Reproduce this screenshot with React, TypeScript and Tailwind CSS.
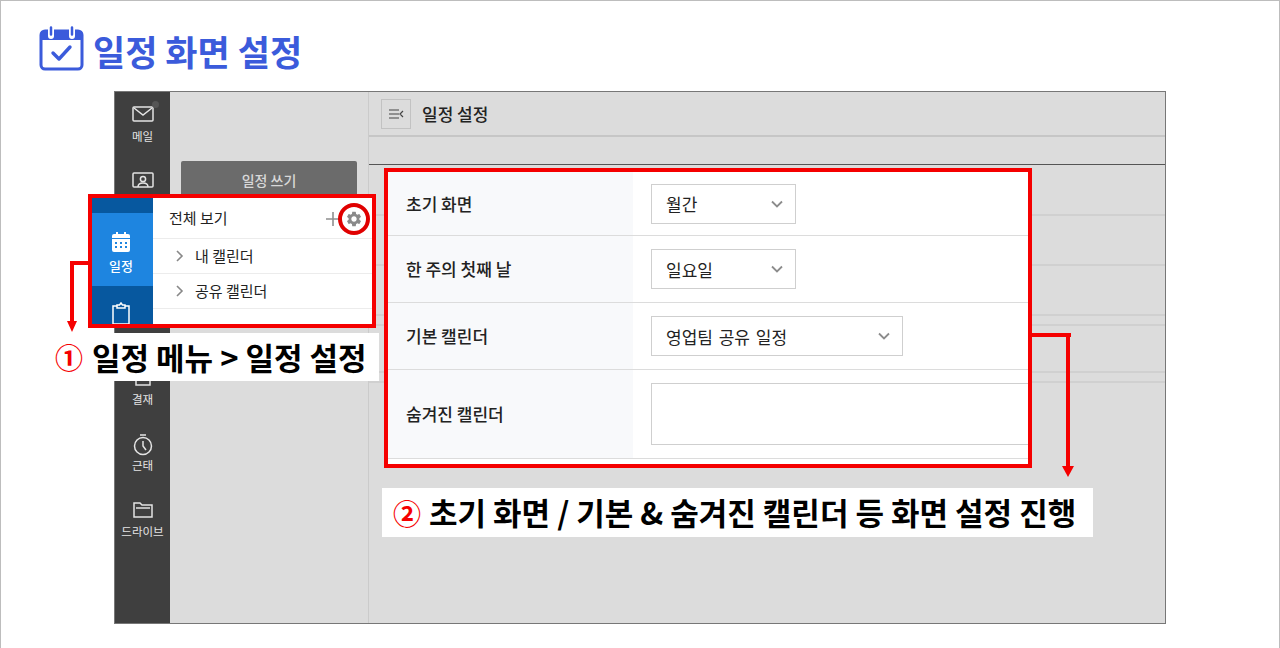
import { MdSettings } from "react-icons/md";

const font = "font-['Noto_Sans_CJK_KR','Noto_Sans',sans-serif]";

function TitleIcon() {
  return (
    <svg width="46" height="46" viewBox="0 0 46 46" fill="none">
      <rect x="2" y="5" width="41" height="38" rx="4" stroke="#3b5bdb" strokeWidth="3" />
      <path d="M2 8a3 3 0 0 1 3-3h35a3 3 0 0 1 3 3v6H2z" fill="#3b5bdb" />
      <path d="M12 2v8M33 2v8" stroke="#fff" strokeWidth="6" strokeLinecap="round" />
      <path d="M12 1.5v7M33 1.5v7" stroke="#3b5bdb" strokeWidth="2.5" strokeLinecap="round" />
      <path d="M14 27l6 6 11-12" stroke="#3b5bdb" strokeWidth="3.4" strokeLinecap="round" strokeLinejoin="round" />
    </svg>
  );
}

function NavItem({ label, icon }: { label: string; icon: React.ReactNode }) {
  return (
    <div className="flex h-[66px] flex-col items-center text-[#e4e4e4]">
      <div className="h-[24px]">{icon}</div>
      <span className="text-[11.5px] leading-[16px]">{label}</span>
    </div>
  );
}

function Chevron() {
  return (
    <svg width="12" height="8" viewBox="0 0 12 8" fill="none">
      <path d="M1 1.5l5 5 5-5" stroke="#8c8c8c" strokeWidth="1.8" />
    </svg>
  );
}

function Select({ value, width }: { value: string; width: string }) {
  return (
    <div className={`flex h-[40px] items-center justify-between border border-[#cfcfcf] bg-white pl-[14px] pr-[12px] text-[17px] [word-spacing:2px] text-[#222] ${width}`}>
      <span className="pt-[1px]">{value}</span>
      <Chevron />
    </div>
  );
}

function FormRow({ label, h, children }: { label: string; h: string; children: React.ReactNode }) {
  return (
    <div className={`flex border-b border-[#dcdcdc] ${h}`}>
      <div className="flex w-[245px] shrink-0 items-center bg-[#f8f9fb] pl-[18px] text-[17px] font-medium text-[#222]">{label}</div>
      <div className="flex flex-1 items-center pl-[18px]">{children}</div>
    </div>
  );
}

function TreeRow({ label }: { label: string }) {
  return (
    <div className="flex h-[35px] items-center border-b border-[#ececec] pl-[23px] text-[15px] text-[#222]">
      <svg width="8" height="12" viewBox="0 0 8 12" fill="none">
        <path d="M1 1l5 5-5 5" stroke="#888" strokeWidth="1.6" />
      </svg>
      <span className="ml-[11px]">{label}</span>
    </div>
  );
}

export default function App() {
  return (
    <div className={`relative h-[648px] w-[1280px] overflow-hidden border-l border-r border-t border-[#bdbdbd] bg-white ${font}`}>
      <div className="flex h-[90px] items-start pl-[38px] pt-[25px]">
        <TitleIcon />
        <h1 className="ml-[8px] mt-[1px] text-[35px] leading-[48px] font-bold text-[#3b5bdb]">일정 화면 설정</h1>
      </div>

      {/* dimmed app window */}
      <div className="ml-[113px] flex h-[533px] w-[1052px] border border-[#777] bg-[#dcdcdc]">
        <div className="relative flex w-[55px] shrink-0 flex-col bg-[#3f3f3f] pt-[12px]">
          <span className="absolute left-[37px] top-[9px] h-[7px] w-[7px] rounded-full bg-[#555]" />
          <NavItem
            label="메일"
            icon={
              <svg width="22" height="20" viewBox="0 0 22 20" fill="none" stroke="#e4e4e4" strokeWidth="1.5">
                <rect x="1" y="3" width="20" height="14" rx="1" />
                <path d="M2 4l9 7 9-7" />
              </svg>
            }
          />
          <NavItem
            label="주소록"
            icon={
              <svg width="22" height="20" viewBox="0 0 22 20" fill="none" stroke="#e4e4e4" strokeWidth="1.5">
                <rect x="1" y="3" width="20" height="14" rx="1" />
                <circle cx="11" cy="9" r="2.6" />
                <path d="M6 17c0-3 2-4 5-4s5 1 5 4" />
              </svg>
            }
          />
          <div className="h-[131px]" />
          <NavItem
            label="결재"
            icon={
              <svg width="22" height="20" viewBox="0 0 22 20" fill="none" stroke="#e4e4e4" strokeWidth="1.5">
                <path d="M15 3H4v15h14V9" />
                <path d="M9 12l9-9" />
              </svg>
            }
          />
          <NavItem
            label="근태"
            icon={
              <svg width="22" height="24" viewBox="0 0 22 24" fill="none" stroke="#e4e4e4" strokeWidth="1.5">
                <circle cx="11" cy="13" r="8.5" />
                <path d="M8 2h6M11 8v5l3 4" />
              </svg>
            }
          />
          <NavItem
            label="드라이브"
            icon={
              <svg width="22" height="20" viewBox="0 0 22 20" fill="none" stroke="#e4e4e4" strokeWidth="1.5">
                <path d="M2 4h6l2 2h10v12H2z" />
                <path d="M4 9h14" />
              </svg>
            }
          />
        </div>

        <div className="w-[199px] shrink-0 border-r border-[#cbcbcb] pl-[11px] pt-[69px]">
          <div className="flex h-[40px] w-[176px] items-center justify-center rounded-[2px] bg-[#6b6b6b] pb-[2px] text-[14px] font-medium text-[#d8d8d8]">일정 쓰기</div>
        </div>

        <div className="flex flex-1 flex-col">
          <div className="flex h-[45px] items-center border-b-2 border-[#c6c6c6] pl-[12px]">
            <div className="flex h-[30px] w-[30px] items-center justify-center border border-[#c2c2c2]">
              <svg width="16" height="12" viewBox="0 0 16 12" fill="none" stroke="#444" strokeWidth="1.2">
                <path d="M1 2h10M1 6h10M1 10h10M15 3l-3 3 3 3" />
              </svg>
            </div>
            <span className="ml-[11px] text-[17px] font-medium text-[#222]">일정 설정</span>
          </div>
          <div className="h-[28px] border-b border-[#555]" />
          <div className="h-[51px] border-b-2 border-[#d0d0d0]" />
          <div className="h-[50px] border-b-2 border-[#d0d0d0]" />
          <div className="h-[50px] border-b-2 border-[#d0d0d0]" />
          <div className="h-[10px] border-b-2 border-[#d0d0d0]" />
          <div className="h-[47px] border-b-2 border-[#d0d0d0]" />
          <div className="h-[10px] border-b-2 border-[#d0d0d0]" />
        </div>
      </div>

      {/* callout 1: menu */}
      <div className="absolute left-[87px] top-[193px] flex h-[134px] w-[288px] border-4 border-[#f50000] bg-white">
        <div className="flex w-[61px] shrink-0 flex-col bg-[#07589f] pr-[3px]">
          <div className="mr-[-3px] h-[16px]" />
          <div className="mr-[-3px] flex h-[75px] flex-col items-center bg-[#1e85e0] pr-[3px] pt-[18px] text-white">
            <svg width="22" height="22" viewBox="0 0 22 22" fill="#fff">
              <path d="M2 7V5a2 2 0 0 1 2-2h2V1h2v2h6V1h2v2h2a2 2 0 0 1 2 2v2z" />
              <path fillRule="evenodd" d="M2 8h18v11a2 2 0 0 1-2 2H4a2 2 0 0 1-2-2zm3 3v2h2v-2zm5 0v2h2v-2zm5 0v2h2v-2zM5 15v2h2v-2zm5 0v2h2v-2zm5 0v2h2v-2z" />
            </svg>
            <span className="mt-[4px] text-[13px] leading-[18px] font-medium">일정</span>
          </div>
          <div className="flex flex-1 justify-center pt-[16px]">
            <svg width="20" height="22" viewBox="0 0 20 22" fill="none" stroke="#fff" strokeWidth="1.5">
              <path d="M6 4H2v18h16V4h-4" />
              <path d="M6 6V3h2.5L10 1l1.5 2H14v3z" />
            </svg>
          </div>
        </div>
        <div className="flex flex-1 flex-col">
          <div className="relative flex h-[41px] items-center border-b border-[#ececec] pl-[16px] text-[15px] text-[#222]">
            <span>전체 보기</span>
            <svg width="14" height="14" viewBox="0 0 14 14" className="absolute left-[173px] top-[14px]" stroke="#8f8f8f" strokeWidth="1.6">
              <path d="M7 0v14M0 7h14" />
            </svg>
            <div className="absolute left-[185px] top-[5px] flex h-[32px] w-[32px] items-center justify-center rounded-full border-4 border-[#e00000]">
              <MdSettings size={18} color="#8a8a8a" />
            </div>
          </div>
          <TreeRow label="내 캘린더" />
          <TreeRow label="공유 캘린더" />
        </div>
      </div>

      {/* arrow 1 */}
      <div className="absolute left-[69px] top-[260px] h-[4px] w-[21px] bg-[#f50000]" />
      <div className="absolute left-[69px] top-[260px] h-[62px] w-[4px] bg-[#f50000]" />
      <div className="absolute left-[66px] top-[320px] h-0 w-0 border-x-[5px] border-t-[11px] border-x-transparent border-t-[#f50000]" />

      {/* label 1 */}
      <div className="absolute left-[47px] top-[332px] flex h-[48px] w-[331px] items-center whitespace-nowrap bg-white pl-[7px] text-[31px] font-bold text-black">
        <span className="mr-[9px] text-[28px] text-[#f50000]">①</span>
        <span>일정 메뉴 &gt; 일정 설정</span>
      </div>

      {/* callout 2: form */}
      <div className="absolute left-[383px] top-[167px] h-[300px] w-[648px] overflow-hidden border-4 border-[#f50000] bg-white">
        <FormRow label="초기 화면" h="h-[64px]">
          <Select value="월간" width="w-[145px]" />
        </FormRow>
        <FormRow label="한 주의 첫째 날" h="h-[67px]">
          <Select value="일요일" width="w-[145px]" />
        </FormRow>
        <FormRow label="기본 캘린더" h="h-[67px]">
          <Select value="영업팀 공유 일정" width="w-[252px]" />
        </FormRow>
        <FormRow label="숨겨진 캘린더" h="h-[89px]">
          <div className="mr-[-4px] h-[62px] flex-1 border border-[#cfcfcf]" />
        </FormRow>
      </div>

      {/* arrow 2 */}
      <div className="absolute left-[1031px] top-[332px] h-[4px] w-[39px] bg-[#f50000]" />
      <div className="absolute left-[1065px] top-[332px] h-[134px] w-[4px] bg-[#f50000]" />
      <div className="absolute left-[1061px] top-[465px] h-0 w-0 border-x-[6px] border-t-[11px] border-x-transparent border-t-[#f50000]" />

      {/* label 2 */}
      <div className="absolute left-[381px] top-[487px] flex h-[49px] w-[711px] items-center whitespace-nowrap bg-white pl-[11px] text-[31px] font-bold text-black">
        <span className="mr-[8px] text-[28px] text-[#f50000]">②</span>
        <span>초기 화면 / 기본 &amp; 숨겨진 캘린더 등 화면 설정 진행</span>
      </div>
    </div>
  );
}
